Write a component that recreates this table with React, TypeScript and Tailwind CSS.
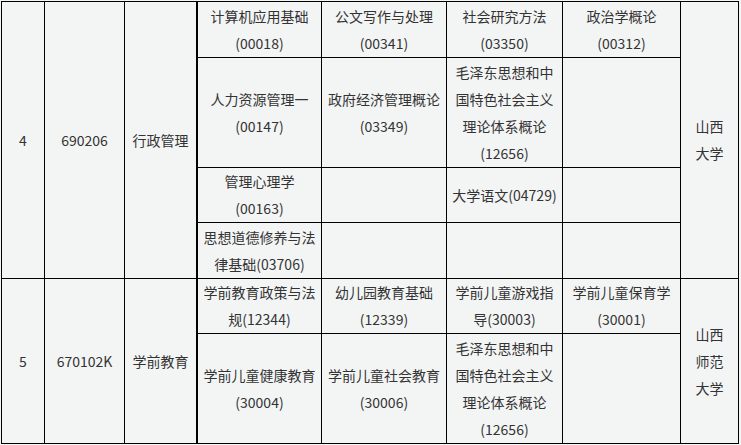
import React from "react"

type Cell = string[] | null

const FONT = { fontFamily: '"Noto Sans CJK SC", "Noto Sans", sans-serif' }

const MAO = ["毛泽东思想和中", "国特色社会主义", "理论体系概论", "(12656)"]

// course cells per row (col4..col7)
const ROWS: Array<{ h: string; cells: Cell[] }> = [
  { h: "h-[56px]", cells: [["计算机应用基础", "(00018)"], ["公文写作与处理", "(00341)"], ["社会研究方法", "(03350)"], ["政治学概论", "(00312)"]] },
  { h: "h-[110px]", cells: [["人力资源管理一", "(00147)"], ["政府经济管理概论", "(03349)"], MAO, null] },
  { h: "h-[55px]", cells: [["管理心理学", "(00163)"], null, ["大学语文(04729)"], null] },
  { h: "h-[56px]", cells: [["思想道德修养与法", "律基础(03706)"], null, null, null] },
  { h: "h-[55px]", cells: [["学前教育政策与法", "规(12344)"], ["幼儿园教育基础", "(12339)"], ["学前儿童游戏指", "导(30003)"], ["学前儿童保育学", "(30001)"]] },
  { h: "h-[110px]", cells: [["学前儿童健康教育", "(30004)"], ["学前儿童社会教育", "(30006)"], MAO, null] },
]

const GROUPS = [
  { start: 0, span: 4, no: "4", code: "690206", major: "行政管理", school: ["山西", "大学"] },
  { start: 4, span: 2, no: "5", code: "670102K", major: "学前教育", school: ["山西", "师范", "大学"] },
]

const td = "border-r border-b border-black p-0 text-center align-middle whitespace-nowrap"

function Lines({ lines }: { lines: string[] | null }) {
  if (!lines) return null
  return (
    <>
      {lines.map((l, i) => (
        <div key={i}>{l}</div>
      ))}
    </>
  )
}

export default function App() {
  return (
    <div className="min-h-[445px] w-[741px] bg-[#f3f5f5] pl-px pt-px" style={FONT}>
      <table className="table-fixed border-separate border-spacing-0 border-t border-l border-black text-[14px] leading-[27px] text-[#333]">
        <colgroup>
          <col className="w-[43px]" />
          <col className="w-[80px]" />
          <col className="w-[73px]" />
          <col className="w-[124px]" />
          <col className="w-[125px]" />
          <col className="w-[116px]" />
          <col className="w-[118px]" />
          <col className="w-[58px]" />
        </colgroup>
        <tbody>
          {ROWS.map((row, i) => {
            const g = GROUPS.find((x) => x.start === i)
            return (
              <tr key={i} className={row.h}>
                {g && (
                  <>
                    <td rowSpan={g.span} className={td}>{g.no}</td>
                    <td rowSpan={g.span} className={td}>{g.code}</td>
                    <td rowSpan={g.span} className={`${td} border-r-2`}>{g.major}</td>
                  </>
                )}
                {row.cells.map((c, j) => (
                  <td key={j} className={td}>
                    <Lines lines={c} />
                  </td>
                ))}
                {g && (
                  <td rowSpan={g.span} className={td}>
                    <Lines lines={g.school} />
                  </td>
                )}
              </tr>
            )
          })}
        </tbody>
      </table>
    </div>
  )
}
